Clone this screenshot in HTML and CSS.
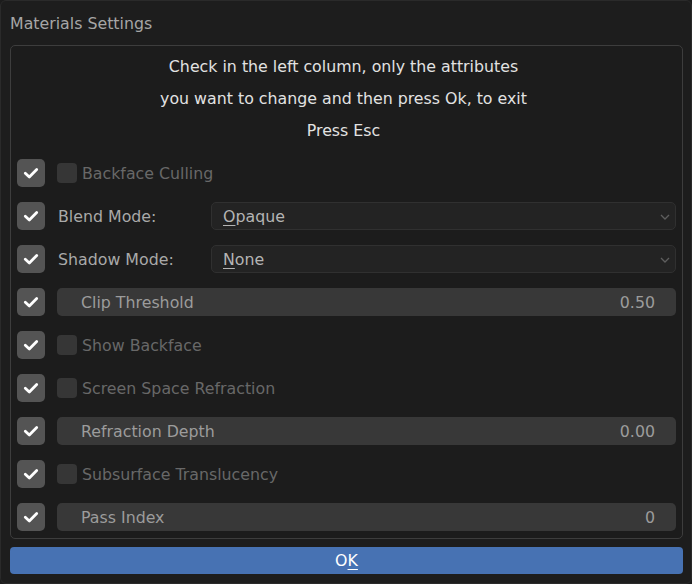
FILE: index.html
```html
<!DOCTYPE html>
<html>
<head>
<meta charset="utf-8">
<link rel="stylesheet" href="styles.css">
</head>
<body>
<div class="window">
  <div class="title">Materials Settings</div>
  <div class="panel">
    <div class="message">
      <div class="line">Check in the left column, only the attributes</div>
      <div class="line">you want to change and then press Ok, to exit</div>
      <div class="line">Press Esc</div>
    </div>
    <div class="rows">
      <div class="row">
        <span class="check"><svg viewBox="0 0 28 28" width="28" height="28"><path d="M8.3 14.3 L12.3 18 L19.7 10.5" fill="none" stroke="#fff" stroke-width="2.8" stroke-linecap="round" stroke-linejoin="round"/></svg></span>
        <div class="content toggle"><span class="box"></span><span class="txt dim">Backface Culling</span></div>
      </div>
      <div class="row">
        <span class="check"><svg viewBox="0 0 28 28" width="28" height="28"><path d="M8.3 14.3 L12.3 18 L19.7 10.5" fill="none" stroke="#fff" stroke-width="2.8" stroke-linecap="round" stroke-linejoin="round"/></svg></span>
        <div class="content prop"><span class="txt plabel">Blend Mode:</span>
          <div class="dropdown"><span class="txt"><span class="ul">O</span>paque</span><svg class="chev" viewBox="0 0 10 6" width="10" height="6"><path d="M1 1 L5 5 L9 1" fill="none" stroke="#5e5e5e" stroke-width="1.3"/></svg></div>
        </div>
      </div>
      <div class="row">
        <span class="check"><svg viewBox="0 0 28 28" width="28" height="28"><path d="M8.3 14.3 L12.3 18 L19.7 10.5" fill="none" stroke="#fff" stroke-width="2.8" stroke-linecap="round" stroke-linejoin="round"/></svg></span>
        <div class="content prop"><span class="txt plabel">Shadow Mode:</span>
          <div class="dropdown"><span class="txt"><span class="ul">N</span>one</span><svg class="chev" viewBox="0 0 10 6" width="10" height="6"><path d="M1 1 L5 5 L9 1" fill="none" stroke="#5e5e5e" stroke-width="1.3"/></svg></div>
        </div>
      </div>
      <div class="row">
        <span class="check"><svg viewBox="0 0 28 28" width="28" height="28"><path d="M8.3 14.3 L12.3 18 L19.7 10.5" fill="none" stroke="#fff" stroke-width="2.8" stroke-linecap="round" stroke-linejoin="round"/></svg></span>
        <div class="content number"><span class="txt">Clip Threshold</span><span class="txt">0.50</span></div>
      </div>
      <div class="row">
        <span class="check"><svg viewBox="0 0 28 28" width="28" height="28"><path d="M8.3 14.3 L12.3 18 L19.7 10.5" fill="none" stroke="#fff" stroke-width="2.8" stroke-linecap="round" stroke-linejoin="round"/></svg></span>
        <div class="content toggle"><span class="box"></span><span class="txt dim">Show Backface</span></div>
      </div>
      <div class="row">
        <span class="check"><svg viewBox="0 0 28 28" width="28" height="28"><path d="M8.3 14.3 L12.3 18 L19.7 10.5" fill="none" stroke="#fff" stroke-width="2.8" stroke-linecap="round" stroke-linejoin="round"/></svg></span>
        <div class="content toggle"><span class="box"></span><span class="txt dim">Screen Space Refraction</span></div>
      </div>
      <div class="row">
        <span class="check"><svg viewBox="0 0 28 28" width="28" height="28"><path d="M8.3 14.3 L12.3 18 L19.7 10.5" fill="none" stroke="#fff" stroke-width="2.8" stroke-linecap="round" stroke-linejoin="round"/></svg></span>
        <div class="content number"><span class="txt">Refraction Depth</span><span class="txt">0.00</span></div>
      </div>
      <div class="row">
        <span class="check"><svg viewBox="0 0 28 28" width="28" height="28"><path d="M8.3 14.3 L12.3 18 L19.7 10.5" fill="none" stroke="#fff" stroke-width="2.8" stroke-linecap="round" stroke-linejoin="round"/></svg></span>
        <div class="content toggle"><span class="box"></span><span class="txt dim">Subsurface Translucency</span></div>
      </div>
      <div class="row">
        <span class="check"><svg viewBox="0 0 28 28" width="28" height="28"><path d="M8.3 14.3 L12.3 18 L19.7 10.5" fill="none" stroke="#fff" stroke-width="2.8" stroke-linecap="round" stroke-linejoin="round"/></svg></span>
        <div class="content number"><span class="txt">Pass Index</span><span class="txt">0</span></div>
      </div>
    </div>
  </div>
  <div class="ok">O<span class="ul">K</span></div>
</div>
</body>
</html>
```

FILE: styles.css
```css
* { box-sizing: border-box; }
html, body { margin: 0; padding: 0; background: #1c1c1c; }
body {
  font-family: "DejaVu Sans", "Liberation Sans", sans-serif;
  font-size: 15.8px;
}
.window {
  width: 692px;
  height: 584px;
  background: #1d1d1d;
  border: 1px solid #2a2a2a;
  border-radius: 6px;
  padding: 0 8px 0 9px;
  display: flex;
  flex-direction: column;
}
.title {
  color: #a6a6a6;
  height: 44px;
  line-height: 46px;
}
.panel {
  border: 1px solid #3d3d3d;
  border-radius: 5px;
  height: 494px;
  padding: 4px 6px 0 6px;
  background: #1c1c1c;
}
.message {
  text-align: center;
  color: #e2e2e2;
  margin: 0 6px 13px 0;
}
.line { height: 32px; line-height: 34px; }
.rows {
  display: flex;
  flex-direction: column;
  gap: 15px;
}
.row {
  display: flex;
  align-items: center;
  height: 28px;
  gap: 12px;
}
.check {
  width: 28px;
  height: 28px;
  border-radius: 5px;
  background: #545454;
  flex: none;
  display: block;
}
.check svg { display: block; }
.content { flex: 1; height: 28px; display: flex; align-items: center; }
.txt { padding-top: 1px; }
.toggle .box {
  width: 20px;
  height: 20px;
  border-radius: 4px;
  background: #363636;
  margin-right: 5px;
}
.dim { color: #686868; }
.prop .plabel { color: #a9a9a9; width: 154px; padding-left: 1px; }
.dropdown {
  flex: 1;
  height: 28px;
  border: 1px solid #303030;
  border-radius: 5px;
  background: #232323;
  display: flex;
  align-items: center;
  justify-content: space-between;
  padding: 0 5px 0 11px;
  color: #b4b4b4;
}
.chev { margin-top: 2px; }
.ul {
  text-decoration: underline;
  text-underline-offset: 3px;
  text-decoration-thickness: 1px;
}
.number {
  background: #383838;
  border-radius: 5px;
  justify-content: space-between;
  padding: 0 21px 0 24px;
  color: #9c9c9c;
}
.ok {
  margin-top: 8px;
  height: 27px;
  background: #4772b3;
  border-radius: 4px;
  color: #ffffff;
  text-align: center;
  line-height: 28px;
}
```
